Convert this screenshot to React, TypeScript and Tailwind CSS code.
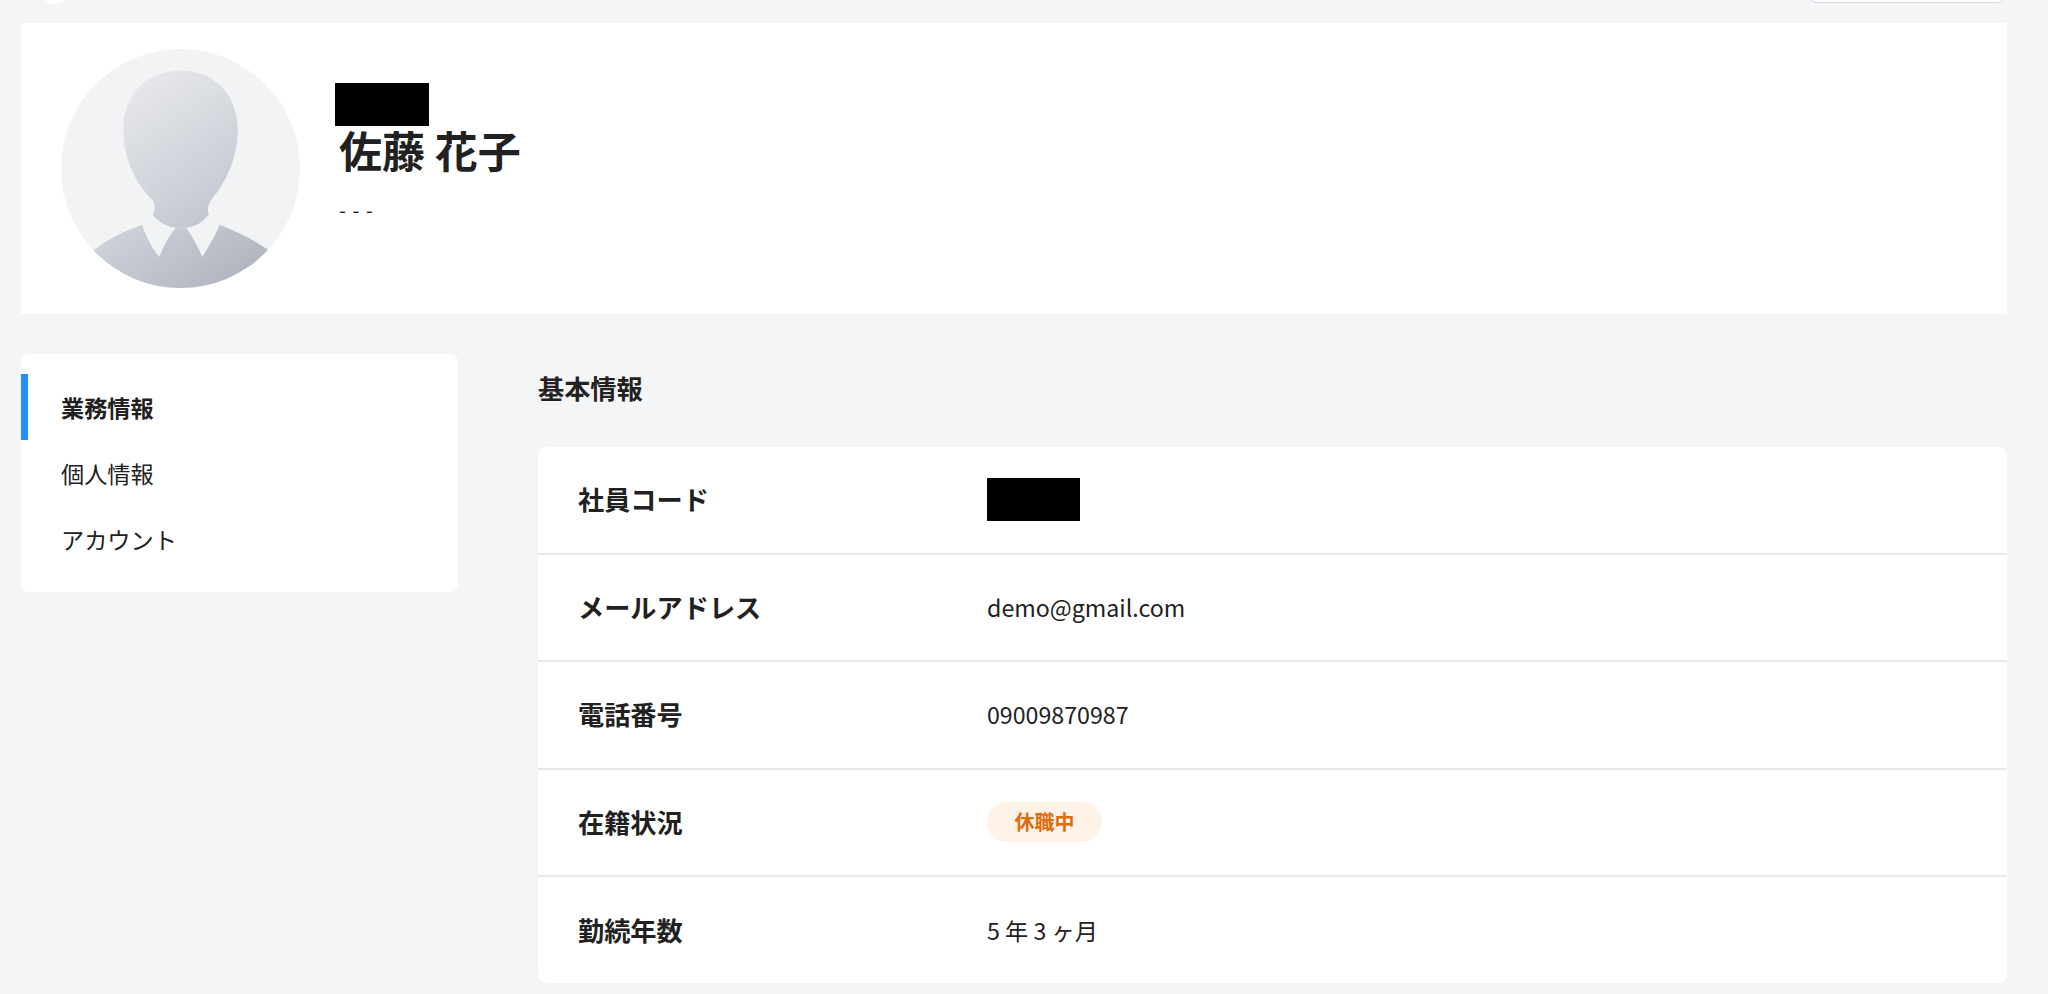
const cjk = "font-['Noto_Sans_CJK_JP','Noto_Sans',sans-serif]";

type Row = { label: string; value: React.ReactNode };

const rows: Row[] = [
  { label: "社員コード", value: <div className="h-[43px] w-[93px] bg-black" /> },
  { label: "メールアドレス", value: "demo@gmail.com" },
  { label: "電話番号", value: "09009870987" },
  {
    label: "在籍状況",
    value: (
      <span className="flex h-[40px] w-[115px] items-center justify-center rounded-full bg-[#fff3e8] text-[20px] font-bold text-[#df6c0b]">
        休職中
      </span>
    ),
  },
  { label: "勤続年数", value: "5 年 3 ヶ月" },
];

function Avatar() {
  return (
    <svg width="239" height="239" viewBox="0 0 238 238" className="shrink-0">
      <defs>
        <clipPath id="avatar-clip">
          <circle cx="119" cy="119" r="119" />
        </clipPath>
        <linearGradient id="avatar-fill" gradientUnits="userSpaceOnUse" x1="50" y1="30" x2="190" y2="235">
          <stop offset="0" stopColor="#eaebed" />
          <stop offset="0.55" stopColor="#cbcfd7" />
          <stop offset="1" stopColor="#aeb2bc" />
        </linearGradient>
      </defs>
      <circle cx="119" cy="119" r="119" fill="#f1f3f5" />
      <g clipPath="url(#avatar-clip)" fill="url(#avatar-fill)">
        <path d="M119 21.5C85 21.5 62 46 62 81C62 108 74 134 91.7 151C93.5 155 94 160 91.3 165.3C97 172 105 177 114 178L124.7 178C134 177 142 172 147.3 164.3C145.5 160 146.5 155 149 151C165 132 176 108 176 81C176 46 153 21.5 119 21.5Z" />
        <path d="M33 200C47 189 62 182 80.7 175C85 188 91 199 98 207C102 196 107 187 114 178L124.7 178C131 187 136 196 140.7 207C147 197 153 187 158 175C176 182 192 190 206 200L206 238L33 238Z" />
      </g>
    </svg>
  );
}

export default function App() {
  return (
    <div className={`h-[994px] overflow-hidden bg-[#f4f5f7] pr-[41px] pl-[21px] text-[#212121] ${cjk}`}>
      {/* top bar, scrolled almost out of view */}
      <div className="flex h-[23px] items-start justify-between overflow-hidden">
        <div className="-mt-[30px] ml-[17px] size-[34px] rounded-full bg-white" />
        <div className="-mt-[30px] mr-[3px] h-[33px] w-[194px] rounded-md border border-[#d5dbe3] bg-white" />
      </div>

      <div className="flex h-[291px] items-center gap-[35px] bg-white pl-[40px]">
        <Avatar />
        <div className="-mt-[29px]">
          <div className="h-[43px] w-[94px] bg-black" />
          <h1 className="-mt-[1px] ml-[4px] text-[43px] leading-[48px] font-bold">佐藤 花子</h1>
          <p className="mt-[22px] ml-[4px] text-[20px] leading-[30px] tracking-[6.5px]">---</p>
        </div>
      </div>

      <div className="mt-[40px] flex gap-[80px]">
        <nav className="h-[238px] w-[437px] shrink-0 rounded-lg bg-white py-[20px] text-[23.2px]">
          <div className="flex h-[66px] items-center border-l-[7px] border-[#2390ff] pl-[33px] font-bold">業務情報</div>
          <div className="flex h-[66px] items-center pl-[40px]">個人情報</div>
          <div className="flex h-[66px] items-center pl-[40px]">アカウント</div>
        </nav>

        <main className="flex-1">
          <h2 className="flex h-[69px] items-center text-[26.2px] font-bold">基本情報</h2>
          <div className="mt-[24px] h-[536px] overflow-hidden rounded-lg bg-white">
            {rows.map((row) => (
              <div
                key={row.label}
                className="flex h-[107.5px] items-center border-b-2 border-[#e4e7eb] pl-[40px] last:border-0"
              >
                <div className="w-[409px] text-[26.2px] font-bold">{row.label}</div>
                <div className="text-[23.2px]">{row.value}</div>
              </div>
            ))}
          </div>
        </main>
      </div>
    </div>
  );
}
